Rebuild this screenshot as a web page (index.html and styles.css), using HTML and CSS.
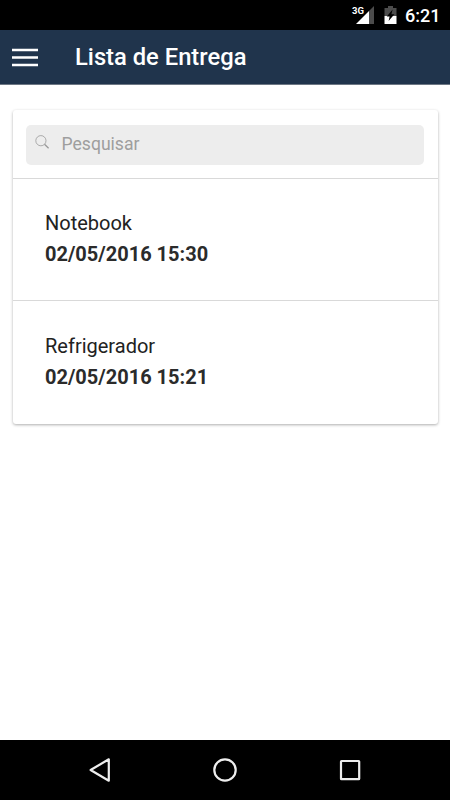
FILE: index.html
```html
<!DOCTYPE html>
<html lang="pt-BR">
<head>
<meta charset="utf-8">
<title>Lista de Entrega</title>
<link rel="stylesheet" href="styles.css">
</head>
<body>
<div class="status">
  <div class="signal">
    <svg width="24" height="20" viewBox="0 0 24 20"><path d="M5 19L18 6V19Z" fill="#fff"/><path d="M18 6L23 1V19H18Z" fill="#4c4c4c"/></svg>
    <span class="network">3G</span>
  </div>
  <svg class="battery" width="13" height="18" viewBox="0 0 13 18"><path d="M0.5 2H4V0H9V2H12.5V10H0.5Z" fill="#4c4c4c"/><path d="M0.5 10H12.5V18H0.5Z" fill="#fff"/><path d="M8.6 3.5L2.8 10.6H5.6L4.6 15L10.4 8.2H7.4Z" fill="#000"/></svg>
  <span class="clock">6:21</span>
</div>
<header class="toolbar">
  <svg class="menu" width="26" height="20" viewBox="0 0 26 20"><path d="M0 2H26M0 9.5H26M0 17H26" stroke="#fff" stroke-width="2.6"/></svg>
  <h1 class="title">Lista de Entrega</h1>
</header>
<main class="content">
  <section class="card">
    <div class="search-row">
      <div class="search">
        <svg width="15" height="15" viewBox="0 0 15 15" fill="none" stroke="#999"><circle cx="5.9" cy="5.7" r="5.1" stroke-width=".8"/><path d="M9.5 9.3L13.6 13.3" stroke-width="1.3"/></svg>
        <span class="placeholder">Pesquisar</span>
      </div>
    </div>
    <div class="item"><div class="name">Notebook</div><div class="date">02/05/2016 15:30</div></div>
    <div class="item"><div class="name">Refrigerador</div><div class="date">02/05/2016 15:21</div></div>
  </section>
</main>
<nav class="navbar">
  <svg width="26" height="26" viewBox="0 0 26 26"><path d="M21.8 2.3V23.7L3.6 13Z"/></svg>
  <svg width="26" height="26" viewBox="0 0 26 26"><circle cx="13" cy="13" r="10.7"/></svg>
  <svg width="26" height="26" viewBox="0 0 26 26"><rect x="4" y="4" width="18.2" height="18.2" rx=".5"/></svg>
</nav>
</body>
</html>
```
FILE: styles.css
```css
* { box-sizing: border-box; }
body {
  margin: 0;
  height: 800px;
  display: flex;
  flex-direction: column;
  background: #fff;
  font-family: Roboto, sans-serif;
  overflow: hidden;
}
svg { display: block; flex: none; }
.status {
  height: 30px;
  flex: none;
  display: flex;
  align-items: center;
  justify-content: flex-end;
  padding-right: 10px;
  background: #000;
  color: #fff;
}
.signal { position: relative; }
.network {
  position: absolute;
  left: 1px;
  top: 0;
  font-size: 9.5px;
  line-height: 12px;
  font-weight: 700;
}
.battery { margin-left: 9px; }
.clock {
  margin-left: 8px;
  width: 35px;
  padding-top: 1px;
  font-size: 18px;
  line-height: 30px;
  font-weight: 500;
  white-space: nowrap;
}
.toolbar {
  height: 55px;
  flex: none;
  display: flex;
  align-items: center;
  padding-left: 12px;
  background: #20344c;
  color: #fff;
  border-bottom: 1px solid #6d7784;
}
.menu { margin-top: 2px; }
.title {
  margin: 0 0 0 37px;
  font-size: 23.75px;
  line-height: 30px;
  font-weight: 500;
}
.content { flex: 1; padding: 25px 12.5px; }
.card {
  height: 314px;
  border-radius: 3px;
  background: #fff;
  box-shadow: 0 1px 3px rgba(0, 0, 0, .32);
}
.search-row { height: 67.5px; padding: 15px 13.5px 0; }
.search {
  height: 40px;
  display: flex;
  align-items: center;
  padding-left: 9px;
  border-radius: 5px;
  background: #ededed;
}
.search svg { margin-top: -5px; }
.placeholder {
  margin: -3px 0 0 11.5px;
  font-size: 17.6px;
  line-height: 24px;
  color: #9e9e9e;
}
.item {
  height: 122.5px;
  padding: 29.5px 32.5px 0;
  border-top: 1.5px solid #d9d9d9;
}
.name, .date {
  font-size: 20px;
  line-height: 31px;
  color: #222;
}
.date { font-weight: 700; color: #2b2b2b; }
.navbar {
  height: 60px;
  flex: none;
  display: flex;
  align-items: center;
  justify-content: space-between;
  padding: 0 87px;
  background: #000;
}
.navbar svg {
  fill: none;
  stroke: #eee;
  stroke-width: 2.2;
  stroke-linejoin: round;
}
```
